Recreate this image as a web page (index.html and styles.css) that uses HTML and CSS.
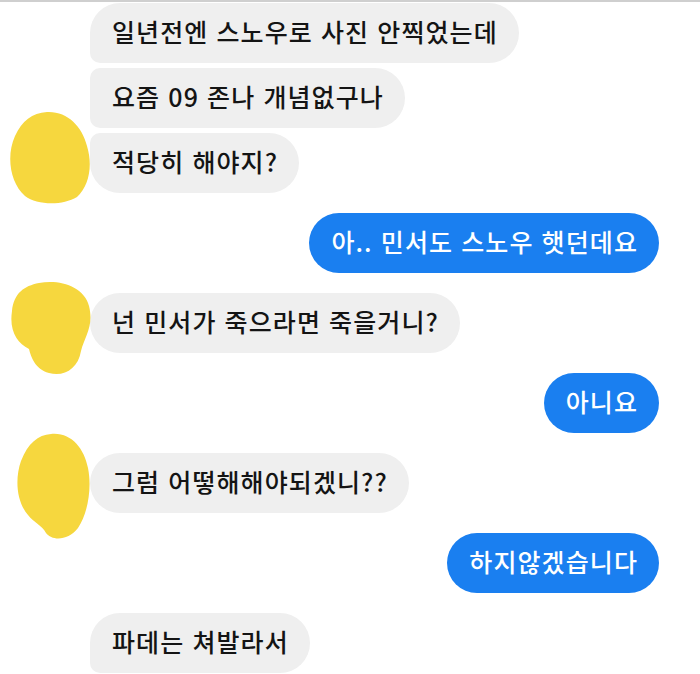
FILE: index.html
```html
<!DOCTYPE html>
<html lang="ko">
<head>
    <meta charset="UTF-8">
    <meta name="viewport" content="width=device-width, initial-scale=1.0">
    <title>채팅</title>
    <link rel="stylesheet" href="styles.css">
</head>
<body>

<div id="conversa">

    <!-- grupo 1 -->
    <div class="grupo recebido">
        <div class="avatar">
            <svg class="mancha mancha-1" width="84" height="94" viewBox="0 0 84 94">
                <path d="M40 1 C60 0 75 15 80 35 C86 55 82 75 70 86 C55 95 30 94 18 85 C3 72 -1 45 8 25 C15 10 25 2 40 1 Z"/>
            </svg>
        </div>
        <div class="baloes">
            <div class="balao primeiro">일년전엔 스노우로 사진 안찍었는데</div>
            <div class="balao meio">요즘 09 존나 개념없구나</div>
            <div class="balao ultimo">적당히 해야지?</div>
        </div>
    </div>

    <div class="grupo enviado">
        <div class="balao azul">아.. 민서도 스노우 햇던데요</div>
    </div>

    <!-- grupo 2 -->
    <div class="grupo recebido">
        <div class="avatar">
            <svg class="mancha mancha-2" width="84" height="96" viewBox="0 0 84 96">
                <path d="M30 2 C50 -2 75 5 80 25 C85 45 76 55 72 70 C69 88 55 96 40 92 C26 88 22 76 20 68 C8 62 0 50 3 30 C5 12 15 5 30 2 Z"/>
            </svg>
        </div>
        <div class="baloes">
            <div class="balao">넌 민서가 죽으라면 죽을거니?</div>
        </div>
    </div>

    <div class="grupo enviado">
        <div class="balao azul">아니요</div>
    </div>

    <!-- grupo 3 -->
    <div class="grupo recebido">
        <div class="avatar">
            <svg class="mancha mancha-3" width="76" height="108" viewBox="0 0 76 108">
                <path d="M35 1 C55 -1 68 15 72 35 C76 55 72 80 62 95 C52 108 36 108 30 100 C26 92 18 90 12 82 C0 68 -1 45 5 28 C12 10 22 2 35 1 Z"/>
            </svg>
        </div>
        <div class="baloes">
            <div class="balao">그럼 어떻해해야되겠니??</div>
        </div>
    </div>

    <div class="grupo enviado">
        <div class="balao azul">하지않겠습니다</div>
    </div>

    <!-- grupo 4 -->
    <div class="grupo recebido">
        <div class="avatar"></div>
        <div class="baloes">
            <div class="balao primeiro">파데는 쳐발라서</div>
        </div>
    </div>

</div>

</body>
</html>
```

FILE: styles.css
```css
* {
    box-sizing: border-box;
}

body {
    margin: 0;
    background-color: #fff;
    font-family: "Noto Sans CJK KR", "Noto Sans", sans-serif;
    overflow: hidden;
}

#conversa {
    width: 700px;
    height: 674px;
    border-top: 2px solid #cfcfcf;
    padding: 1px 41px 0 0;
    display: flex;
    flex-direction: column;
    gap: 20px;
}

.grupo {
    display: flex;
}

.enviado {
    justify-content: flex-end;
}

.avatar {
    width: 90px;
    flex-shrink: 0;
    position: relative;
}

.baloes {
    display: flex;
    flex-direction: column;
    align-items: flex-start;
    gap: 5px;
}

.balao {
    height: 60px;
    line-height: 56px;
    padding: 0 21px 0 22px;
    font-size: 25px;
    font-weight: 500;
    letter-spacing: 1.1px;
    color: #141414;
    background-color: #efefef;
    border-radius: 30px;
    white-space: nowrap;
}

.balao.primeiro {
    border-radius: 30px 30px 30px 10px;
}

.balao.meio {
    border-radius: 10px 30px 30px 10px;
}

.balao.ultimo {
    border-radius: 10px 30px 30px 30px;
}

.balao.azul {
    background-color: #1a7ff0;
    color: #fff;
    line-height: 57px;
}

/* manchas amarelas sobre as fotos */
.mancha {
    position: absolute;
    fill: #f6d73e;
}

.mancha-1 {
    left: 7px;
    bottom: -12px;
}

.mancha-2 {
    left: 9px;
    bottom: -24px;
}

.mancha-3 {
    left: 16px;
    bottom: -28px;
}
```
